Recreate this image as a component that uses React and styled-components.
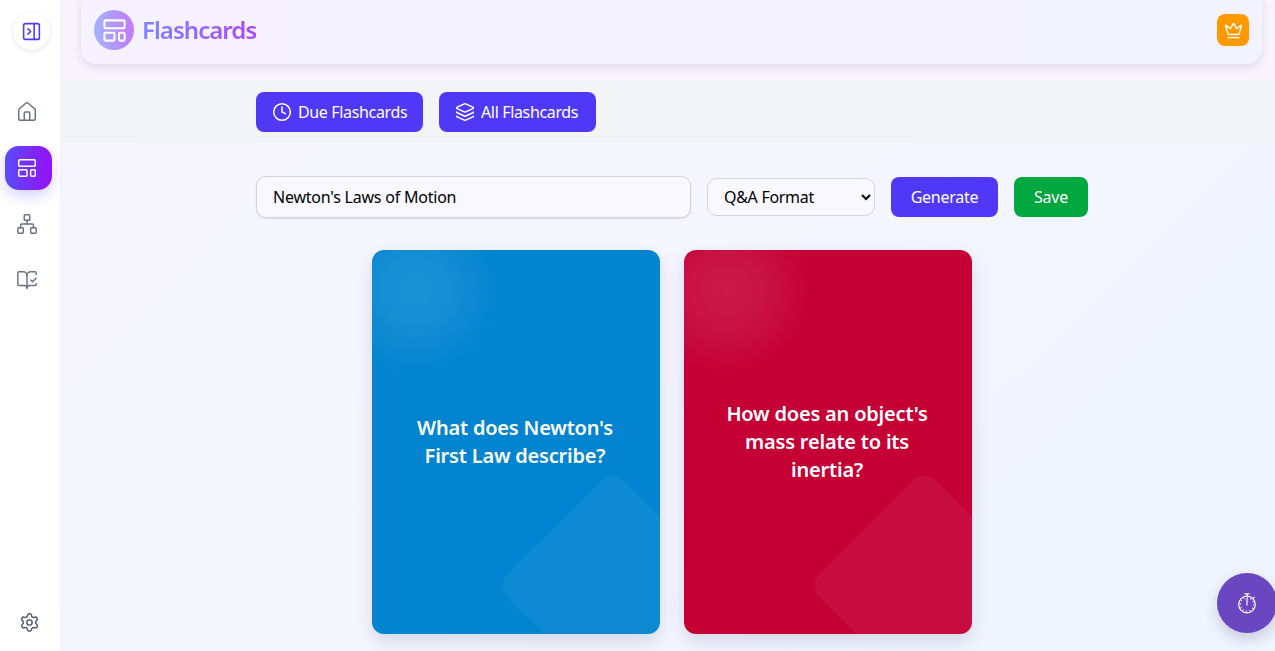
import React from 'react';
import styled, { createGlobalStyle } from 'styled-components';
import { BookOpenCheck, Clock, Crown, House, Layers, LayoutTemplate, Network, PanelRightClose, Settings } from 'lucide-react';

const GlobalStyle = createGlobalStyle`
  html, body, #root {
    height: 100%;
    margin: 0;
  }
  body {
    overflow: hidden;
    font-family: "Noto Sans", "Open Sans", sans-serif;
  }
  * {
    box-sizing: border-box;
  }
`;

const Page = styled.div`
  display: flex;
  height: 651px;
  background: linear-gradient(135deg, #f7f5ff 0%, #f5f6ff 50%, #eff4fe 100%);
`;

const Sidebar = styled.aside`
  flex: 0 0 60px;
  display: flex;
  flex-direction: column;
  align-items: center;
  padding: 13px 0 18px;
  background: #fff;
`;

const ToggleButton = styled.div`
  width: 37px;
  height: 37px;
  margin: 0 0 0 2px;
  display: flex;
  align-items: center;
  justify-content: center;
  border-radius: 50%;
  background: #fff;
  color: #4f39f6;
  box-shadow: 0 1px 4px rgba(30, 30, 60, 0.12);
`;

const NavList = styled.nav`
  flex: 1;
  display: flex;
  flex-direction: column;
  align-items: center;
  gap: 12px;
  margin-top: 40px;
  margin-right: 3px;
`;

const NavItem = styled.div`
  width: 47px;
  height: 44px;
  display: flex;
  align-items: center;
  justify-content: center;
  padding-right: 3px;
  border-radius: 14px;
  color: #6a7282;
  background: ${props => props.$active ? 'linear-gradient(90deg, #5a4bfa, #9610fa)' : 'transparent'};
  ${props => props.$active ? 'color: #fff; box-shadow: 0 6px 14px rgba(79, 57, 246, 0.22);' : ''}
`;

const SettingsItem = styled.div`
  color: #4a5565;
  display: flex;
  margin-left: -2px;
`;

const Main = styled.main`
  flex: 1;
  min-width: 0;
  display: flex;
  flex-direction: column;
`;

const HeaderBand = styled.div`
  height: 80px;
  padding: 0 13px 16px 21px;
  background: #f8f5ff;
`;

const Header = styled.header`
  height: 64px;
  display: flex;
  align-items: center;
  justify-content: space-between;
  padding: 0 13px;
  border-radius: 0 0 16px 16px;
  background: linear-gradient(90deg, #f6f2ff, #f3f3ff);
  box-shadow: 0 3px 10px rgba(40, 40, 90, 0.14);
`;

const Brand = styled.div`
  display: flex;
  align-items: center;
  gap: 8px;
  margin-top: -4px;
`;

const BrandIcon = styled.div`
  width: 40px;
  height: 40px;
  display: flex;
  align-items: center;
  justify-content: center;
  border-radius: 50%;
  color: #fff;
  background: linear-gradient(90deg, #a3b3ff, #c27aff);
`;

const BrandTitle = styled.h1`
  margin: 0;
  font-size: 24px;
  font-weight: 600;
  line-height: 32px;
  letter-spacing: -0.95px;
  background: linear-gradient(90deg, #7c86ff, #ad46ff);
  -webkit-background-clip: text;
  background-clip: text;
  color: transparent;
`;

const PremiumBadge = styled.div`
  width: 32px;
  height: 32px;
  margin-top: -4px;
  display: flex;
  align-items: center;
  justify-content: center;
  border-radius: 8px;
  color: #fff;
  background: #fe9a00;
`;

const TabBand = styled.div`
  height: 63px;
  display: flex;
  gap: 16px;
  padding: 12px 0 0 196px;
  background: #f3f4f6;
`;

const TabButton = styled.button`
  height: 40px;
  width: ${props => props.$width}px;
  display: flex;
  align-items: center;
  gap: 6px;
  padding: 0 0 0 16px;
  border: 0;
  border-radius: 8px;
  font: inherit;
  font-size: 16px;
  letter-spacing: -0.35px;
  color: #fff;
  background: #4f39f6;
`;

const Content = styled.div`
  flex: 1;
  padding: 33px 0 0 196px;
  min-height: 0;
`;

const Controls = styled.div`
  width: 832px;
  display: flex;
  align-items: center;
  gap: 16px;
`;

const TopicInput = styled.input`
  width: 435px;
  height: 42px;
  padding: 0 16px;
  border: 1px solid #d1d5dc;
  border-radius: 10px;
  font: inherit;
  font-size: 16px;
  letter-spacing: -0.22px;
  color: #000;
  background: #f9f8ff;
  box-shadow: 0 1px 2px rgba(0, 0, 0, 0.12);
`;

const FormatSelect = styled.select`
  width: 168px;
  height: 38px;
  padding: 0 12px;
  border: 1px solid #d1d5dc;
  border-radius: 10px;
  font: inherit;
  font-size: 16px;
  letter-spacing: -0.3px;
  color: #000;
  background: #f9f8ff;
`;

const ActionButton = styled.button`
  height: 40px;
  width: ${props => props.$width}px;
  padding: 0;
  border: 0;
  border-radius: 8px;
  font: inherit;
  font-size: 16px;
  letter-spacing: -0.25px;
  color: #fff;
  background: ${props => props.$tone};
`;

const CardRow = styled.div`
  width: 832px;
  display: flex;
  justify-content: center;
  gap: 24px;
  margin-top: 32px;
`;

const Card = styled.article`
  position: relative;
  overflow: hidden;
  width: 288px;
  height: 384px;
  display: flex;
  align-items: center;
  justify-content: center;
  padding: 24px 26px 24px 24px;
  border-radius: 12px;
  background: ${props => props.$color};
  box-shadow: 0 8px 18px rgba(40, 40, 90, 0.14);

  &::before {
    content: '';
    position: absolute;
    left: -42px;
    top: -45px;
    width: 170px;
    height: 170px;
    border-radius: 50%;
    background: radial-gradient(circle closest-side, rgba(255, 255, 255, 0.1) 0%, rgba(255, 255, 255, 0.08) 40%, rgba(255, 255, 255, 0) 100%);
  }

  &::after {
    content: '';
    position: absolute;
    left: 158px;
    top: 253px;
    width: 165px;
    height: 165px;
    border-radius: 16px;
    transform: rotate(45deg);
    background: rgba(255, 255, 255, 0.05);
  }
`;

const Question = styled.h2`
  position: relative;
  z-index: 1;
  margin: 0;
  font-size: 20px;
  font-weight: 600;
  line-height: 28px;
  letter-spacing: -0.2px;
  text-align: center;
  color: #fff;
`;

const TimerButton = styled.button`
  position: fixed;
  left: 1217px;
  top: 573px;
  width: 60px;
  height: 60px;
  display: flex;
  align-items: center;
  justify-content: center;
  border: 0;
  border-radius: 50%;
  color: #fff;
  background: #6b46c1;
  box-shadow: 0 6px 14px rgba(40, 40, 90, 0.2);
`;

const cards = [
  { id: 1, color: '#0284d0', text: "What does Newton's First Law describe?" },
  { id: 2, color: '#c40035', text: "How does an object's mass relate to its inertia?" },
];

const StopwatchIcon = () => (
  <svg width="24" height="24" viewBox="0 0 24 24" fill="none" stroke="currentColor" strokeWidth="1.2" strokeLinecap="round">
    <circle cx="12" cy="13.5" r="8.3" />
    <circle cx="12" cy="13.5" r="6.6" strokeWidth="1.2" strokeLinecap="butt" strokeDasharray="1 2.45" />
    <path d="M12 14V7.5" />
    <path d="M12 5V2.8M10 2.8h4M18 7.5l1.3-1.3" />
  </svg>
);

const App = () => (
  <Page>
    <GlobalStyle />
    <Sidebar>
      <ToggleButton><PanelRightClose size={21} strokeWidth={1.8} /></ToggleButton>
      <NavList>
        <NavItem><House size={22} strokeWidth={1.6} /></NavItem>
        <NavItem $active><LayoutTemplate size={22} strokeWidth={1.6} /></NavItem>
        <NavItem><Network size={22} strokeWidth={1.6} /></NavItem>
        <NavItem><BookOpenCheck size={22} strokeWidth={1.6} /></NavItem>
      </NavList>
      <SettingsItem><Settings size={21} strokeWidth={1.6} /></SettingsItem>
    </Sidebar>
    <Main>
      <HeaderBand>
        <Header>
          <Brand>
            <BrandIcon><LayoutTemplate size={27} strokeWidth={1.8} /></BrandIcon>
            <BrandTitle>Flashcards</BrandTitle>
          </Brand>
          <PremiumBadge><Crown size={19} strokeWidth={1.8} /></PremiumBadge>
        </Header>
      </HeaderBand>
      <TabBand>
        <TabButton $width={167}><Clock size={20} strokeWidth={1.8} />Due Flashcards</TabButton>
        <TabButton $width={157}><Layers size={20} strokeWidth={1.8} />All Flashcards</TabButton>
      </TabBand>
      <Content>
        <Controls>
          <TopicInput defaultValue="Newton's Laws of Motion" />
          <FormatSelect defaultValue="qa">
            <option value="qa">Q&amp;A Format</option>
          </FormatSelect>
          <ActionButton $tone="#4f39f6" $width={107}>Generate</ActionButton>
          <ActionButton $tone="#00a63e" $width={74}>Save</ActionButton>
        </Controls>
        <CardRow>
          {cards.map(card => (
            <Card key={card.id} $color={card.color}>
              <Question>{card.text}</Question>
            </Card>
          ))}
        </CardRow>
      </Content>
    </Main>
    <TimerButton><StopwatchIcon /></TimerButton>
  </Page>
);

export default App;
